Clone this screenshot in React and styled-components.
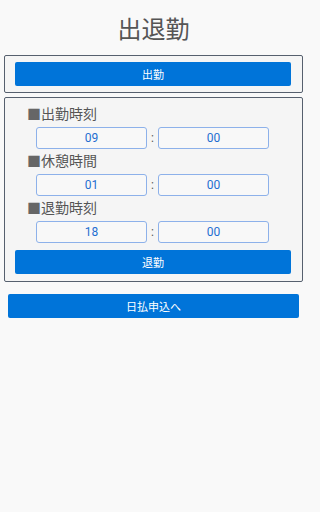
import React, { useState } from 'react'
import styled, { createGlobalStyle } from 'styled-components'

const GlobalStyle = createGlobalStyle`
  html, body {
    margin: 0;
    padding: 0;
    background: #f9f9f9;
    font-family: Roboto, "Noto Sans CJK JP", sans-serif;
  }
`;

const Page = styled.div`
  width: 307px;
  min-height: 512px;
  background: #f9f9f9;
  display: flex;
  flex-direction: column;
`;

const Title = styled.h1`
  margin: 0;
  height: 55px;
  display: flex;
  align-items: center;
  justify-content: center;
  font-size: 24px;
  font-weight: 400;
  color: #555;
  padding-bottom: 1px;
  box-sizing: border-box;
`;

const Panel = styled.section`
  margin: 0 4px ${({ gap }) => gap || 0}px 4px;
  border: 1px solid #56606e;
  border-radius: 2px;
  background: #f5f5f5;
  padding: ${({ pad }) => pad}px 11px ${({ pad }) => pad}px 10px;
  display: flex;
  flex-direction: column;
`;

const BlueButton = styled.button`
  height: 24px;
  margin: ${({ m }) => m || '0'};
  border: none;
  border-radius: 2px;
  background: #0074d9;
  color: #fff;
  font-family: Roboto, "Noto Sans CJK JP", sans-serif;
  font-size: 11px;
  padding: 0;
  cursor: pointer;
`;

const Label = styled.div`
  height: 16px;
  line-height: 16px;
  margin-left: 12px;
  margin-top: ${({ first }) => (first ? 0 : 3)}px;
  margin-bottom: 6px;
  font-size: 14px;
  color: #555;
`;

const Square = styled.span`
  color: #666;
  font-family: "Noto Sans CJK JP", sans-serif;
`;

const TimeRow = styled.div`
  display: flex;
  justify-content: center;
  align-items: center;
  padding-right: 1px;
`;

const TimeInput = styled.input`
  width: 111px;
  height: 22px;
  box-sizing: border-box;
  border: 1px solid #8db1ea;
  border-radius: 3px;
  background: #f8f8f8;
  color: #1f6fd1;
  font-family: Roboto, "Noto Sans CJK JP", sans-serif;
  font-size: 12px;
  text-align: center;
  padding: 0;
  outline: none;
`;

const Colon = styled.span`
  width: 11px;
  text-align: center;
  font-size: 12px;
  color: #555;
`;

const times = [
  { label: '出勤時刻', h: '09', m: '00' },
  { label: '休憩時間', h: '01', m: '00' },
  { label: '退勤時刻', h: '18', m: '00' },
]

const App = () => {
  const [rows, setRows] = useState(times)

  const change = (i, key, v) => {
    const next = rows.map((r, idx) => (idx === i ? { ...r, [key]: v } : r))
    setRows(next)
  }

  return (
    <>
      <GlobalStyle />
      <Page>
        <Title>出退勤</Title>
        <Panel pad={6} gap={4}>
          <BlueButton>出勤</BlueButton>
        </Panel>
        <Panel pad={7}>
          {rows.map((r, i) => (
            <React.Fragment key={r.label}>
              <Label first={i === 0}><Square>■</Square>{r.label}</Label>
              <TimeRow>
                <TimeInput value={r.h} onChange={(e) => change(i, 'h', e.target.value)} />
                <Colon>:</Colon>
                <TimeInput value={r.m} onChange={(e) => change(i, 'm', e.target.value)} />
              </TimeRow>
            </React.Fragment>
          ))}
          <BlueButton m="7px 0 0 0">退勤</BlueButton>
        </Panel>
        <BlueButton m="12px 8px 0 8px">日払申込へ</BlueButton>
      </Page>
    </>
  )
}

export default App
